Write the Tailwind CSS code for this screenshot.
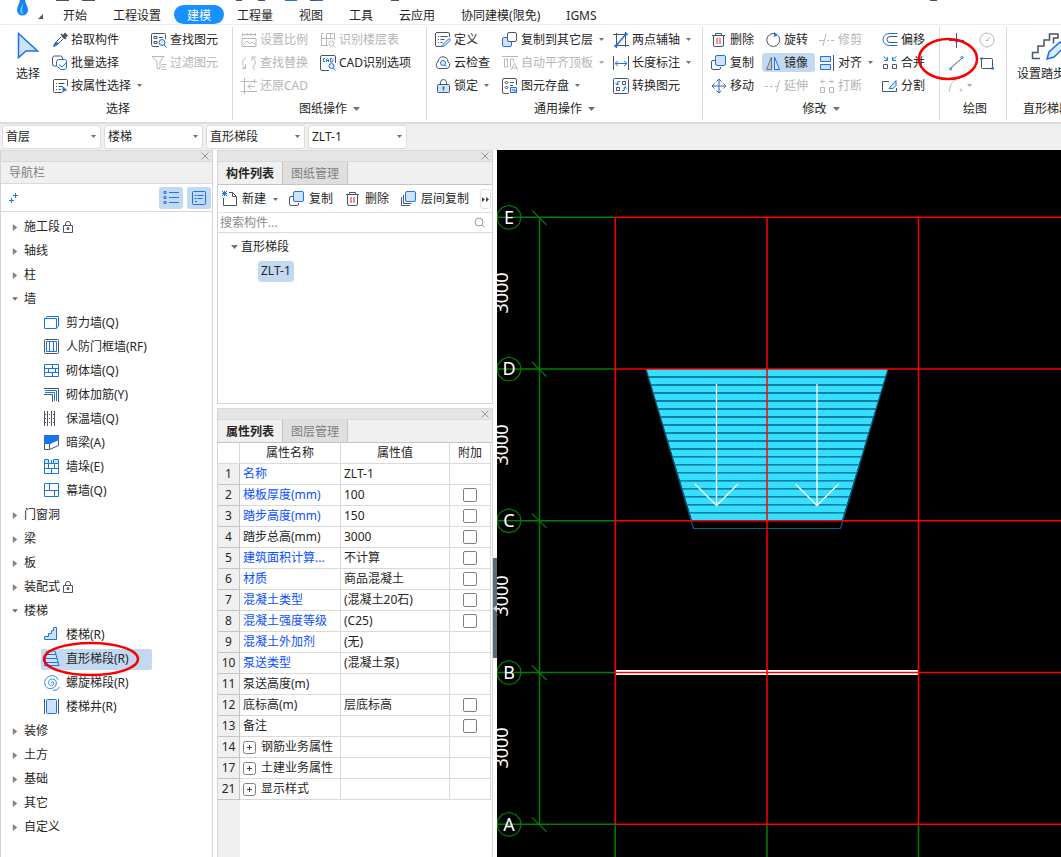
<!DOCTYPE html>
<html lang="zh-CN">
<head>
    <meta charset="UTF-8">
    <meta name="viewport" content="width=device-width, initial-scale=1.0">
    <title>建模</title>
    <script src="https://cdn.jsdelivr.net/npm/@tailwindcss/browser@4"></script>
</head>
<body class="flex h-screen flex-col overflow-hidden bg-white font-['Noto_Sans','Noto_Sans_CJK_SC',sans-serif] text-xs leading-4 text-[#262626]">

    <!-- Icon set -->
    <svg class="hidden">
        <symbol id="caret" viewBox="0 0 7 4"><path d="M0 0h7L3.500 4z" fill="#707070"/></symbol>
        <symbol id="close" viewBox="0 0 8 8"><path d="M.5 .5l7 7M7.500 .5l-7 7" stroke="#999" fill="none"/></symbol>
        <symbol id="picker" viewBox="0 0 16 16"><path d="M9 2l5 5M10.500 4.500l2.500-3 2 2-3 2.500z" stroke="#4a5468" stroke-width="1.500" fill="#4a5468"/><path d="M9 5l-6 6-1 3 3-1 6-6" fill="none" stroke="#4a5468"/><path d="M5 10l-3 2-1 3 2-.5 4-3.500z" fill="#1a73e8"/></symbol>
        <symbol id="batch" viewBox="0 0 16 16"><path d="M4 11H2.500a2 2 0 0 1-2-2V3a2 2 0 0 1 2-2h6a2 2 0 0 1 2 2v1" fill="none" stroke="#4a5468"/><path d="M7 4.500h5.500a2 2 0 0 1 2 2V12a2 2 0 0 1-2 2.500H9L4.500 11V7A2.500 2.500 0 0 1 7 4.500z" fill="#fff" stroke="#1a73e8"/><path d="M7 9.500l3 2.500 4-4" stroke="#1a73e8" fill="none"/></symbol>
        <symbol id="byprop" viewBox="0 0 16 16"><path d="M10 14.500H2.500a1 1 0 0 1-1-1v-11a1 1 0 0 1 1-1h12a1 1 0 0 1 1 1V8M4 5.500h1M4 8.500h1M4 11.500h1M6.500 5.500h6M6.500 8.500h4M6.500 11.500h2" fill="none" stroke="#4a5468"/><path d="M10.500 8l5 4.500-2.500.3-2.500 2z" fill="#1a73e8"/></symbol>
        <symbol id="find" viewBox="0 0 16 16"><path d="M8 14.500H2.500a2 2 0 0 1-2-2v-10a1 1 0 0 1 1-1h12a1 1 0 0 1 1 1V7" fill="none" stroke="#4a5468"/><path d="M3 4.500h3v2H3zM3 9.500h3v2H3zM8 5.500h4" fill="none" stroke="#4a5468"/><circle cx="11" cy="10.500" r="3" fill="#dbeafe" stroke="#1a73e8"/><path d="M13 13l2.500 2.500" stroke="#1a73e8"/></symbol>
        <symbol id="filter" viewBox="0 0 16 16"><path d="M1 1.500h12L9 7v6.500H6V7L1 1.500M10.500 9.500h5M10.500 12h4M10.500 14.500h5" fill="none" stroke="#b8b8b8"/></symbol>
        <symbol id="scale" viewBox="0 0 16 16"><path d="M1.500 1v3M14.500 1v3M2 2.500h12M6 1v3M10 1v3M1 6.500h14v8H1zM2 13l4-4 3 3 2-2 4 3" fill="none" stroke="#b8b8b8"/></symbol>
        <symbol id="replace" viewBox="0 0 16 16"><path d="M5 2.500C1 4.500.5 10 4 13M4.500 9.500V13.500H1M11 2c4 2 4.500 7 1 10M11 6V2h4M11.500 12l2.500 3" fill="none" stroke="#b8b8b8"/></symbol>
        <symbol id="restore" viewBox="0 0 16 16"><path d="M3.500 0v16M0 3.500h16M13.500 1v4M0 13.500h16M7 8.500h7M10 5.500l-3 3 3 3" fill="none" stroke="#b8b8b8"/></symbol>
        <symbol id="floors" viewBox="0 0 16 16"><path d="M1.500 1v12.500H8M1.500 6.500h12M6.500 1.500h8V8M6.500 1.500v12M10.500 2v5M1 1.500h3" fill="none" stroke="#b8b8b8"/><circle cx="11.500" cy="11.500" r="2.500" fill="none" stroke="#b8b8b8"/><path d="M13.500 13.500l2 2" stroke="#b8b8b8"/></symbol>
        <symbol id="cad" viewBox="0 0 16 16"><path d="M9 15.500H2a1.500 1.500 0 0 1-1.500-1.500V2A1.500 1.500 0 0 1 2 .5h12A1.500 1.500 0 0 1 15.500 2v6" fill="none" stroke="#4a5468"/><path d="M5 3.500H3.500v3H5M6.500 7V4.500l1-1 1 1V7M6.500 5.500h2M10.500 3.500v3.500h1.500l1-1V4.500l-1-1z" fill="none" stroke="#1a73e8"/><circle cx="11.500" cy="11" r="2.500" fill="#dbeafe" stroke="#1a73e8"/><path d="M13.500 13l2 2.500" stroke="#1a73e8"/></symbol>
        <symbol id="define" viewBox="0 0 16 16"><path d="M7 14.500H2a1.500 1.500 0 0 1-1.500-1.500V2A1.500 1.500 0 0 1 2 .5h11A1.500 1.500 0 0 1 14.500 2v3M3 4.500h1M3 7.500h1M3 10.500h1M5.500 4.500h7M5.500 7.500h4M5.500 10.500h2" fill="none" stroke="#4a5468"/><path d="M14 6.500l1.500 1.500-6 6-2 .5.5-2z" fill="#dbeafe" stroke="#1a73e8"/></symbol>
        <symbol id="cloud" viewBox="0 0 16 16"><path d="M4 13.500a3.500 3.500 0 0 1-1-6.500C3 0 13 0 13 7a3.500 3.500 0 0 1-1 6.500z" fill="none" stroke="#4a5468"/><circle cx="8" cy="8" r="2.500" fill="#dbeafe" stroke="#1a73e8"/><path d="M10 10l1.500 1.500" stroke="#1a73e8"/></symbol>
        <symbol id="lock" viewBox="0 0 16 16"><path d="M5.500 6V4.500a3 3 0 0 1 6 0V6" fill="none" stroke="#4a5468"/><rect x="2.500" y="6.500" width="12" height="8" rx="1" fill="#cfe2fb" stroke="#4a5468"/><path d="M8.500 8.500v4M7.500 9.500h2" stroke="#1a73e8" stroke-width="1.500"/></symbol>
        <symbol id="copyto" viewBox="0 0 16 16"><rect x=".5" y="5.500" width="9" height="9" rx="1.500" fill="#cfe2fb" stroke="#1a73e8"/><rect x="5.500" y=".5" width="9" height="9" rx="1.500" fill="#fff" stroke="#4a5468"/></symbol>
        <symbol id="aligntop" viewBox="0 0 16 16"><path d="M0 1.500h16M2.500 4h3v8h-3zM8.500 12V4h3v3M9 15l3.500-7L15.500 15M10 13h5" fill="none" stroke="#b8b8b8"/></symbol>
        <symbol id="store" viewBox="0 0 16 16"><path d="M7 15.500H2A1.500 1.500 0 0 1 .5 14V2A1.500 1.500 0 0 1 2 .5h11A1.500 1.500 0 0 1 14.500 2v5M8 4.500h4M8 7.500h3" fill="none" stroke="#4a5468"/><ellipse cx="4.500" cy="4.500" rx="1.500" ry="1" fill="none" stroke="#4a5468"/><ellipse cx="4.500" cy="9.500" rx="1.500" ry="1" fill="none" stroke="#4a5468"/><path d="M8.500 9.500h6v5h-6zM10 12h3v2.500" fill="#dbeafe" stroke="#1a73e8"/></symbol>
        <symbol id="axis" viewBox="0 0 16 16"><path d="M3.500 1v15M12.500 0v15M0 2.500h15M1 13.500h15" stroke="#4a5468" fill="none"/><path d="M3 14L13 2" stroke="#1a73e8" stroke-width="1.500"/><circle cx="3" cy="14" r="1.500" fill="#1a73e8"/><circle cx="13" cy="2" r="1.500" fill="#1a73e8"/></symbol>
        <symbol id="length" viewBox="0 0 16 16"><path d="M.5 1v14M15.500 1v14" stroke="#4a5468"/><path d="M2 8.500h12M5 6l-3 2.500L5 11M11 6l3 2.500L11 11" stroke="#1a73e8" fill="none"/></symbol>
        <symbol id="convert" viewBox="0 0 16 16"><rect x=".5" y=".5" width="15" height="15" rx="1" fill="none" stroke="#4a5468"/><path d="M9.500 3.500h3v3h-3zM3.500 9.500h3v3h-3z" fill="none" stroke="#4a5468"/><path d="M7 3.500H5L4 6.500M2.500 5l1.500 2L6 5.500M9 12.500h2l1-3M10.500 10.500l1.500-2 1.500 2" stroke="#1a73e8" fill="none"/></symbol>
        <symbol id="trash" viewBox="0 0 16 16"><path d="M1 3.500h13M4.500 3V1.500h6V3M2.500 4v9A1.500 1.500 0 0 0 4 14.500h7a1.500 1.500 0 0 0 1.500-1.500V4" fill="none" stroke="#4a5468"/><path d="M6 6v6M9 6v6" stroke="#e02020"/></symbol>
        <symbol id="copy" viewBox="0 0 16 16"><path d="M4 5.500H2A1.500 1.500 0 0 0 .5 7v6A1.500 1.500 0 0 0 2 14.500h6A1.500 1.500 0 0 0 9.500 13v-1" fill="none" stroke="#4a5468"/><rect x="4.500" y=".5" width="10" height="10" rx="1.500" fill="#cfe2fb" stroke="#1a73e8"/></symbol>
        <symbol id="move" viewBox="0 0 16 16"><path d="M8 2v4M8 10v4M2 8h4M10 8h4" stroke="#4a5468"/><path d="M5.500 3.500L8 1l2.500 2.500M5.500 12.500L8 15l2.500-2.500M3.500 5.500L1 8l2.500 2.500M12.500 5.500L15 8l-2.500 2.500M6 8h4M8 6v4" fill="none" stroke="#1a73e8"/></symbol>
        <symbol id="rotate" viewBox="0 0 16 16"><path d="M9 1.500a6.500 6.500 0 1 0 4 2" fill="none" stroke="#4a5468"/><path d="M9 0l4 3-4 2z" fill="#1a73e8"/></symbol>
        <symbol id="mirror" viewBox="0 0 16 16"><path d="M6.500 2v12.500h-5z" fill="#c4c9d4" stroke="#6b7280"/><path d="M9.500 2v12.500h5z" fill="#dbeafe" stroke="#1a73e8"/></symbol>
        <symbol id="extend" viewBox="0 0 16 16"><path d="M0 8.500h3M5 8.500h3M10 8.500h2M14.500 2l-3 12" fill="none" stroke="#b8b8b8"/></symbol>
        <symbol id="trim" viewBox="0 0 16 16"><path d="M0 8.500h5M7 2L4 14M8 8.500h2M12 8.500h3" fill="none" stroke="#b8b8b8"/></symbol>
        <symbol id="align" viewBox="0 0 16 16"><path d="M1.500 1.500h10v5h-10zM1.500 9.500h10v5h-10z" fill="#cfe2fb" stroke="#1a73e8"/><path d="M14.500 0v16" stroke="#4a5468"/></symbol>
        <symbol id="break" viewBox="0 0 16 16"><path d="M1.500 9.500h4v5h-4zM10.500 9.500h4v5h-4zM2 3.500h4M4 1.500l-2 2 2 2M10 3.500h4M12 1.500l2 2-2 2" fill="none" stroke="#b8b8b8"/></symbol>
        <symbol id="offset" viewBox="0 0 16 16"><path d="M15.500 1.500H7a6 6 0 0 0 0 12h8.500" fill="none" stroke="#1a73e8"/><path d="M15.500 4.500H8a3 3 0 0 0 0 6h7.500" fill="none" stroke="#4a5468"/></symbol>
        <symbol id="merge" viewBox="0 0 16 16"><path d="M1.500 9.500h4v4h-4zM10.500 9.500h4v4h-4z" fill="none" stroke="#4a5468"/><path d="M1.500 1.500l3.500 3M5.500 2v3.500H2M14.500 1.500l-3.500 3M10.500 2v3.500H14" fill="none" stroke="#1a73e8"/></symbol>
        <symbol id="split" viewBox="0 0 16 16"><path d="M7 3.500H.5v10h14V10" fill="none" stroke="#4a5468"/><path d="M14 2.500v5l-3 3H7z" fill="#dbeafe" stroke="#1a73e8"/></symbol>
        <symbol id="point" viewBox="0 0 16 16"><path d="M8.500 1v15M1 8.500h15" stroke="#4a5468"/><circle cx="8.500" cy="8.500" r="2" fill="#1a73e8"/></symbol>
        <symbol id="circle" viewBox="0 0 16 16"><circle cx="8" cy="8" r="7" fill="none" stroke="#b8b8b8"/><path d="M8 8l3-3M6.500 8.500h3" stroke="#b8b8b8"/></symbol>
        <symbol id="line" viewBox="0 0 16 16"><path d="M3 13L14 3" stroke="#4a5468"/><circle cx="2.500" cy="14" r="1" fill="#fff" stroke="#1a73e8"/><circle cx="14" cy="2.500" r="1" fill="#fff" stroke="#1a73e8"/></symbol>
        <symbol id="rect" viewBox="0 0 16 16"><rect x="2.500" y="3.500" width="11" height="10" rx="1" fill="none" stroke="#4a5468"/><path d="M1 3.500h3M12 13.500h3" stroke="#1a73e8" stroke-width="2"/></symbol>
        <symbol id="arc" viewBox="0 0 16 16"><path d="M1.500 13.500C2 7 4 3 8 2" fill="none" stroke="#b8b8b8"/><circle cx="13" cy="12" r="1" fill="none" stroke="#b8b8b8"/></symbol>
        <symbol id="nav-lock" viewBox="0 0 10 12"><path d="M2.500 4V3a2.500 2.500 0 0 1 5 0v1M.5 4.500h9v7h-9zM5 7v2" fill="none" stroke="#4a5468"/><circle cx="5" cy="7.500" r="1" fill="none" stroke="#4a5468"/></symbol>
        <symbol id="right" viewBox="0 0 5 8"><path d="M0 0l5 4-5 4z" fill="#808080"/></symbol>
        <symbol id="plusbox" viewBox="0 0 13 13"><rect x=".5" y=".5" width="12" height="12" rx="2" fill="#fff" stroke="#808080"/><path d="M4 6.500h5M6.500 4v5" stroke="#444"/></symbol>
    </svg>

    <!-- Menu tabs -->
    <header class="relative flex h-[25px] shrink-0 items-end border-b border-[#ececec] pl-[50px]">
        <svg class="absolute left-0 top-0 h-6 w-full" aria-hidden="true">
            <path d="M20 0h5c0 3 3 6 3 10a5.500 5.500 0 0 1-11 0c0-4 3-7 3-10z" fill="#1583f2"/>
            <path d="M23 3c-1 3-3 5-3 8 0 2 2 3 4 3-3-2-1-8-1-11z" fill="#5cc3ff"/>
            <path d="M43 14v5h-5z" fill="#555"/>
            <path d="M56 .5h13M82 .5h13M236 .5h6M258 .5h7M310 .5h10M391 .5h8M930 .5h7" stroke="#4a5468"/>
            <path d="M285 .5h12M317 .5h6" stroke="#1a73e8"/>
        </svg>
        <nav class="relative flex h-[19px] [&>button]:h-[19px] [&>button]:px-[13px] [&>button]:pt-[2px] [&>button]:whitespace-nowrap">
            <button>开始</button>
            <button>工程设置</button>
            <button class="rounded-full bg-[#1890ff] text-white">建模</button>
            <button>工程量</button>
            <button>视图</button>
            <button>工具</button>
            <button>云应用</button>
            <button>协同建模(限免)</button>
            <button>IGMS</button>
        </nav>
    </header>

    <!-- Ribbon -->
    <div class="flex h-[99px] shrink-0 overflow-hidden border-b-2 border-[#dcdcdc] py-[2px] whitespace-nowrap [&_button]:flex [&_button]:h-[23px] [&_button]:items-center [&_button]:gap-[3px] [&_button:disabled]:text-[#b5b5b5] [&_section]:flex [&_section]:shrink-0 [&_section]:flex-col [&_section]:border-r [&_section]:border-[#d9d9d9] [&_section]:pt-px [&_svg]:shrink-0">
        <section class="w-[233px]">
            <div class="flex">
                <div class="ml-4 flex w-9 flex-col gap-[2px] pt-1">
                    <svg class="h-7 w-6" viewBox="0 0 24 28"><path d="M2.500 1.500v24L10 19h11.500z" fill="#cfe2fb" stroke="#1a73e8" stroke-width="1.500"/></svg>
                    <button>选择</button>
                </div>
                <div class="w-[99px]">
                    <button><svg class="size-4"><use href="#picker"/></svg>拾取构件</button>
                    <button><svg class="size-4"><use href="#batch"/></svg>批量选择</button>
                    <button><svg class="size-4"><use href="#byprop"/></svg>按属性选择<svg class="ml-[3px] h-[3px] w-[5px]"><use href="#caret"/></svg></button>
                </div>
                <div>
                    <button><svg class="size-4"><use href="#find"/></svg>查找图元</button>
                    <button disabled><svg class="size-4"><use href="#filter"/></svg>过滤图元</button>
                </div>
            </div>
            <div class="flex h-7 items-center justify-center pl-1">选择</div>
        </section>

        <section class="w-[194px]">
            <div class="flex pl-2">
                <div class="w-[79px]">
                    <button disabled><svg class="size-4"><use href="#scale"/></svg>设置比例</button>
                    <button disabled><svg class="size-4"><use href="#replace"/></svg>查找替换</button>
                    <button disabled><svg class="size-4"><use href="#restore"/></svg>还原CAD</button>
                </div>
                <div>
                    <button disabled><svg class="size-4"><use href="#floors"/></svg>识别楼层表</button>
                    <button><svg class="size-4"><use href="#cad"/></svg>CAD识别选项</button>
                </div>
            </div>
            <div class="flex h-[26px] items-center justify-center gap-[6px]">图纸操作<svg class="h-1 w-[7px]"><use href="#caret"/></svg></div>
        </section>

        <section class="w-[276px]">
            <div class="flex pl-2">
                <div class="w-[67px]">
                    <button><svg class="size-4"><use href="#define"/></svg>定义</button>
                    <button><svg class="size-4"><use href="#cloud"/></svg>云检查</button>
                    <button><svg class="size-4"><use href="#lock"/></svg>锁定<svg class="ml-[3px] h-[3px] w-[5px]"><use href="#caret"/></svg></button>
                </div>
                <div class="w-[111px]">
                    <button><svg class="size-4"><use href="#copyto"/></svg>复制到其它层<svg class="ml-[3px] h-[3px] w-[5px]"><use href="#caret"/></svg></button>
                    <button disabled><svg class="size-4"><use href="#aligntop"/></svg>自动平齐顶板<svg class="ml-[3px] h-[3px] w-[5px] opacity-60"><use href="#caret"/></svg></button>
                    <button><svg class="size-4"><use href="#store"/></svg>图元存盘<svg class="ml-[3px] h-[3px] w-[5px]"><use href="#caret"/></svg></button>
                </div>
                <div>
                    <button><svg class="size-4"><use href="#axis"/></svg>两点辅轴<svg class="ml-[3px] h-[3px] w-[5px]"><use href="#caret"/></svg></button>
                    <button><svg class="size-4"><use href="#length"/></svg>长度标注<svg class="ml-[3px] h-[3px] w-[5px]"><use href="#caret"/></svg></button>
                    <button><svg class="size-4"><use href="#convert"/></svg>转换图元</button>
                </div>
            </div>
            <div class="flex h-[26px] items-center justify-center gap-[6px]">通用操作<svg class="h-1 w-[7px]"><use href="#caret"/></svg></div>
        </section>

        <section class="w-[237px]">
            <div class="flex pl-2">
                <div class="w-[51px]">
                    <button><svg class="size-4"><use href="#trash"/></svg>删除</button>
                    <button><svg class="size-4"><use href="#copy"/></svg>复制</button>
                    <button><svg class="size-4"><use href="#move"/></svg>移动</button>
                </div>
                <div class="w-[57px] [&>button]:px-[3px]">
                    <button><svg class="size-4"><use href="#rotate"/></svg>旋转</button>
                    <div class="flex h-[23px] items-center"><button class="!h-[19px] rounded-[3px] bg-[#c2d9f1] pr-[7px] pl-[3px]"><svg class="size-4"><use href="#mirror"/></svg>镜像</button></div>
                    <button disabled><svg class="size-4"><use href="#extend"/></svg>延伸</button>
                </div>
                <div class="w-[63px]">
                    <button disabled><svg class="size-4"><use href="#trim"/></svg>修剪</button>
                    <button><svg class="size-4"><use href="#align"/></svg>对齐<svg class="ml-[3px] h-[3px] w-[5px]"><use href="#caret"/></svg></button>
                    <button disabled><svg class="size-4"><use href="#break"/></svg>打断</button>
                </div>
                <div>
                    <button><svg class="size-4"><use href="#offset"/></svg>偏移</button>
                    <button><svg class="size-4"><use href="#merge"/></svg>合并</button>
                    <button><svg class="size-4"><use href="#split"/></svg>分割</button>
                </div>
            </div>
            <div class="flex h-[26px] items-center justify-center gap-[6px]">修改<svg class="h-1 w-[7px]"><use href="#caret"/></svg></div>
        </section>

        <section class="relative w-[67px]">
            <div class="flex pl-2">
                <div class="w-[31px]">
                    <button aria-label="点"><svg class="size-4"><use href="#point"/></svg></button>
                    <button aria-label="直线"><svg class="size-4"><use href="#line"/></svg></button>
                    <button disabled aria-label="弧"><svg class="size-4"><use href="#arc"/></svg><svg class="h-[3px] w-[5px] opacity-60"><use href="#caret"/></svg></button>
                </div>
                <div>
                    <button disabled aria-label="圆"><svg class="size-4"><use href="#circle"/></svg></button>
                    <button aria-label="矩形"><svg class="size-4"><use href="#rect"/></svg></button>
                </div>
            </div>
            <div class="flex h-7 items-center justify-center pl-1">绘图</div>
            <svg class="absolute -left-[23px] top-[10px] h-[44px] w-[62px]"><ellipse cx="31" cy="22" rx="29" ry="20" fill="none" stroke="#fa0000" stroke-width="2.500"/></svg>
        </section>

        <section class="w-[80px] items-center border-r-0!">
            <div class="flex h-[69px] shrink-0 flex-col items-center gap-[2px] pt-1">
                <svg class="ml-1 h-7 w-9" viewBox="0 0 36 28"><path d="M9 26.500H1.500v-6H7V14h6V8h5.500V2H27v4h-4.500v5.500" fill="none" stroke="#4a5468" stroke-width="1.500"/><path d="M29 10l5 4.500L23 25l-7 2 2-7z" fill="#dbeafe" stroke="#1a73e8" stroke-width="1.500"/></svg>
                <button>设置踏步边</button>
            </div>
            <div class="flex h-7 items-center">直形梯段</div>
        </section>
    </div>

    <!-- Context selectors -->
    <div class="flex h-[26px] shrink-0 gap-[3px] bg-[#f0f0f0] px-[2px] py-px [&_label]:relative [&_select]:h-6 [&_select]:w-[99px] [&_select]:appearance-none [&_select]:rounded-[3px] [&_select]:border [&_select]:border-[#dcdcdc] [&_select]:bg-white [&_select]:pl-[3px] [&_svg]:pointer-events-none [&_svg]:absolute [&_svg]:right-[5px] [&_svg]:top-[10px] [&_svg]:h-[3px] [&_svg]:w-[5px]">
        <label><select aria-label="楼层"><option>首层</option></select><svg><use href="#caret"/></svg></label>
        <label><select aria-label="构件类别"><option>楼梯</option></select><svg><use href="#caret"/></svg></label>
        <label><select aria-label="构件类型"><option>直形梯段</option></select><svg><use href="#caret"/></svg></label>
        <label><select aria-label="构件"><option>ZLT-1</option></select><svg><use href="#caret"/></svg></label>
    </div>

    <main class="flex min-h-0 grow">
        <!-- Navigation -->
        <aside class="flex w-[213px] shrink-0 flex-col border-x border-[#d4d4d4]">
            <div class="flex h-3 items-center justify-end border-y border-[#d9d9d9] bg-[#e6e6e6] pr-[3px]"><button aria-label="关闭"><svg class="size-2"><use href="#close"/></svg></button></div>
            <h2 class="flex h-[22px] items-center border-b border-[#d9d9d9] bg-[#f0f0f0] pl-2 text-[#808080]">导航栏</h2>
            <div class="flex h-7 items-center gap-1 border-b border-[#d9d9d9] pr-px pl-2">
                <button class="mr-auto" aria-label="展开"><svg class="size-[10px]" viewBox="0 0 10 10"><path d="M0 7.500h5M2.500 5v5M4 2.500h5M6.500 0v5" stroke="#1a73e8"/></svg></button>
                <button class="flex h-[22px] w-6 items-center justify-center rounded-[3px] bg-[#c2d9f1]" aria-label="列表"><svg class="size-4" viewBox="0 0 16 16"><path d="M6 2.500h10M6 7.500h10M6 12.500h10M1 1.500h2v2H1zM1 6.500h2v2H1zM1 11.500h2v2H1z" fill="none" stroke="#1a73e8"/></svg></button>
                <button class="flex h-[22px] w-6 items-center justify-center rounded-[3px] bg-[#c2d9f1]" aria-label="详情"><svg class="size-4" viewBox="0 0 16 16"><rect x="1.500" y="1.500" width="13" height="13" rx="1" fill="none" stroke="#1a73e8"/><path d="M3.500 5.500h2M6.500 5.500h6M3.500 8.500h2M6.500 8.500h5M4 11.500h2" stroke="#1a73e8"/></svg></button>
            </div>
            <ul class="overflow-hidden pt-[3px] [&_button]:flex [&_button]:h-6 [&_button]:items-center [&>li>button]:gap-1 [&>li>button]:pl-[11px] [&>li>button>svg:first-child]:mr-[2px] [&_ul_button]:gap-[6px] [&_ul_button]:pl-[43px] [&_ul_svg]:size-4">
                <li><button><svg class="h-[7px] w-[6px]"><use href="#right"/></svg>施工段<svg class="-ml-px h-3 w-[10px]"><use href="#nav-lock"/></svg></button></li>
                <li><button><svg class="h-[7px] w-[6px]"><use href="#right"/></svg>轴线</button></li>
                <li><button><svg class="h-[7px] w-[6px]"><use href="#right"/></svg>柱</button></li>
                <li>
                    <button><svg class="h-1 w-[6px]"><use href="#caret"/></svg>墙</button>
                    <ul>
                        <li><button><svg viewBox="0 0 16 16"><path d="M.5 3.500h12v10H.5zM1.500 3.500L3 1.500h11.500v9.500L12.500 13" fill="none" stroke="#1a73e8"/></svg>剪力墙(Q)</button></li>
                        <li><button><svg viewBox="0 0 16 16"><rect x=".5" y=".5" width="14" height="14" rx="1" fill="none" stroke="#4a5468"/><path d="M2.500 2.500h10v10h-10zM5.500 3v9M9.500 3v9" fill="none" stroke="#1a73e8"/></svg>人防门框墙(RF)</button></li>
                        <li><button><svg viewBox="0 0 16 16"><path d="M.5 1.500h14v12H.5zM.5 5.500h14M.5 9.500h14M8.500 2v3.500M4.500 6v3M11.500 6v3M8.500 10v3" fill="none" stroke="#1a73e8"/></svg>砌体墙(Q)</button></li>
                        <li><button><svg viewBox="0 0 16 16"><path d="M0 1.500h14.500V15M0 7.500h8.500V15" fill="none" stroke="#4a5468"/><path d="M1 3.500h11.500V14M1 5.500h9.500V14" fill="none" stroke="#1a73e8"/></svg>砌体加筋(Y)</button></li>
                        <li><button><svg viewBox="0 0 16 16"><path d="M.5 0v15M3.500 0v15M7.500 0v15M10.500 0v15" stroke="#4a5468"/><path d="M1 3.500h10M1 7.500h10M1 11.500h10" stroke="#4a5468" stroke-dasharray="1 1"/></svg>保温墙(Q)</button></li>
                        <li><button><svg viewBox="0 0 16 16"><path d="M0 0h15v5L6 9H0z" fill="#1a73e8"/><path d="M.5 9v5.500h5l9-4V5M5.500 9v5" fill="none" stroke="#4a5468"/></svg>暗梁(A)</button></li>
                        <li><button><svg viewBox="0 0 16 16"><path d="M1 1h4v4H1zM10 1h4v4h-4z" fill="#cfe2fb"/><path d="M.5 .5h4v4h5v-4h5v14H.5zM4.500 4.500H0M9.500 4.500H15M7.500 1v4M.5 9.500h14M4.500 5v4M10.500 5v4M7.500 10v4" fill="none" stroke="#1a73e8"/></svg>墙垛(E)</button></li>
                        <li><button><svg viewBox="0 0 16 16"><path d="M.5 .5h14v13H.5zM.5 7.500h14M5.500 1v6.500M10.500 8v5" fill="none" stroke="#1a73e8"/></svg>幕墙(Q)</button></li>
                    </ul>
                </li>
                <li><button><svg class="h-[7px] w-[6px]"><use href="#right"/></svg>门窗洞</button></li>
                <li><button><svg class="h-[7px] w-[6px]"><use href="#right"/></svg>梁</button></li>
                <li><button><svg class="h-[7px] w-[6px]"><use href="#right"/></svg>板</button></li>
                <li><button><svg class="h-[7px] w-[6px]"><use href="#right"/></svg>装配式<svg class="-ml-px h-3 w-[10px]"><use href="#nav-lock"/></svg></button></li>
                <li>
                    <button><svg class="h-1 w-[6px]"><use href="#caret"/></svg>楼梯</button>
                    <ul>
                        <li><button><svg viewBox="0 0 16 16"><path d="M.5 12.500v-3h4v-3h3v-3h2v-3h3v12z" fill="#cfe2fb" stroke="#1a73e8"/></svg>楼梯(R)</button></li>
                        <li class="relative flex h-6 items-center pl-10">
                            <button class="!h-[21px] w-[111px] rounded-[2px] bg-[#c2d9f1] !pl-[3px]"><svg viewBox="0 0 16 16"><path d="M3 0h8l4 14.500H0zM3 3.500h9M2 7.500h11M1 11.500h13" fill="#cfe2fb" stroke="#1a73e8"/></svg>直形梯段(R)</button>
                            <svg class="absolute top-[-6px] left-10 !h-9 !w-[100px]"><ellipse cx="50" cy="18" rx="47" ry="16" fill="none" stroke="#fa0000" stroke-width="2.500"/></svg>
                        </li>
                        <li><button><svg viewBox="0 0 16 16"><path d="M8 8.500C6.500 8 7.500 6 9 7c2 1.500 0 4.500-2.500 3.500C3 9 4.500 4 8.500 4c5 0 5 7.500.5 9C4 15 .5 11.500.7 7.500 1 3 4.500.7 8 .7c3 0 5 1.500 6 4M15.500 12c-1.500 2.500-4 3.500-6.500 3.300" fill="none" stroke="#2f86ee"/></svg>螺旋梯段(R)</button></li>
                        <li><button><svg viewBox="0 0 16 16"><rect x="2.500" y=".5" width="10" height="14" rx="1" fill="#cfe2fb" stroke="#1a73e8"/><path d="M.5 0v15M14.500 0v15" stroke="#4a5468"/></svg>楼梯井(R)</button></li>
                    </ul>
                </li>
                <li><button><svg class="h-[7px] w-[6px]"><use href="#right"/></svg>装修</button></li>
                <li><button><svg class="h-[7px] w-[6px]"><use href="#right"/></svg>土方</button></li>
                <li><button><svg class="h-[7px] w-[6px]"><use href="#right"/></svg>基础</button></li>
                <li><button><svg class="h-[7px] w-[6px]"><use href="#right"/></svg>其它</button></li>
                <li><button><svg class="h-[7px] w-[6px]"><use href="#right"/></svg>自定义</button></li>
            </ul>
        </aside>

        <div class="ml-1 flex w-[276px] shrink-0 flex-col">
            <!-- Component list -->
            <section class="flex h-[254px] shrink-0 flex-col border border-t-0 border-[#d4d4d4]">
                <div class="flex h-3 items-center justify-end border-y border-[#d9d9d9] bg-[#e6e6e6] pr-[3px]"><button aria-label="关闭"><svg class="size-2"><use href="#close"/></svg></button></div>
                <div class="flex h-[23px] border-b border-[#c4c4c4] bg-[#f0f0f0] [&>button]:border-r [&>button]:border-[#c4c4c4] [&>button]:pt-[2px]">
                    <button class="w-[65px] font-bold">构件列表</button>
                    <button class="w-[65px] bg-[#dfdfdf] text-[#808080]">图纸管理</button>
                </div>
                <div class="flex h-7 shrink-0 items-center border-b border-[#e2e2e2] pt-px whitespace-nowrap [&>button]:flex [&>button]:items-center [&>button]:gap-1">
                    <button class="ml-1 w-[67px]"><svg class="size-4" viewBox="0 0 16 16"><path d="M1.500 7v7.500h13v-9l-4-4H7M10.500 1.500v4h4" fill="none" stroke="#4a5468"/><path d="M0 0l5 5M5 0L0 5M2.500 0v5M0 2.500h5" stroke="#1a73e8"/></svg>新建<svg class="ml-[3px] h-[3px] w-[5px]"><use href="#caret"/></svg></button>
                    <button class="w-[56px]"><svg class="size-4"><use href="#copy"/></svg>复制</button>
                    <button class="w-[56px]"><svg class="size-4"><use href="#trash"/></svg>删除</button>
                    <button class="grow"><svg class="size-4" viewBox="0 0 16 16"><path d="M.5 6v8.500H9M2.500 4v8.500h8" fill="none" stroke="#4a5468"/><rect x="4.500" y=".5" width="10" height="10" rx="1.500" fill="#cfe2fb" stroke="#1a73e8"/></svg>层间复制</button>
                    <button class="mr-px h-5 w-[11px] justify-center rounded-[3px] border border-[#e2e2e2]" aria-label="更多"><svg class="h-[5px] w-[7px] shrink-0" viewBox="0 0 7 5"><path d="M0 0l3 2.500L0 5zM4 0l3 2.500L4 5z" fill="#444"/></svg></button>
                </div>
                <label class="flex h-5 shrink-0 items-center border-b border-[#d9d9d9] pr-[7px]">
                    <input class="h-4 min-w-0 grow pl-[2px] outline-none placeholder:text-[#8c8c8c]" placeholder="搜索构件..." aria-label="搜索构件">
                    <svg class="size-[11px]" viewBox="0 0 11 11"><circle cx="5" cy="5" r="4" fill="none" stroke="#999"/><path d="M8 8l2.500 2.500" stroke="#999"/></svg>
                </label>
                <ul class="pt-[2px]">
                    <li>
                        <button class="flex h-6 items-center gap-[3px] pl-[13px]"><svg class="h-1 w-[7px]"><use href="#caret"/></svg>直形梯段</button>
                        <ul><li class="flex h-6 items-center pl-10"><button class="h-[21px] rounded-[3px] bg-[#c2d9f1] px-[3px]">ZLT-1</button></li></ul>
                    </li>
                </ul>
            </section>

            <!-- Properties -->
            <section class="mt-1 flex min-h-0 grow flex-col border border-y-0 border-[#d4d4d4]">
                <div class="flex h-3 shrink-0 items-center justify-end border-y border-[#d9d9d9] bg-[#e6e6e6] pr-[3px]"><button aria-label="关闭"><svg class="size-2"><use href="#close"/></svg></button></div>
                <div class="flex h-[23px] shrink-0 border-b border-[#c4c4c4] bg-[#f0f0f0] [&>button]:border-r [&>button]:border-[#c4c4c4] [&>button]:pt-[2px]">
                    <button class="w-[65px] font-bold">属性列表</button>
                    <button class="w-[65px] bg-[#dfdfdf] text-[#808080]">图层管理</button>
                </div>
                <table class="mr-px table-fixed border-separate border-spacing-0 whitespace-nowrap [&_input]:mx-auto [&_input]:block [&_input]:size-[14px] [&_input]:appearance-none [&_input]:rounded-[2px] [&_input]:border [&_input]:border-[#808080] [&_td]:h-[21px] [&_td]:border-r [&_td]:border-b [&_td]:border-[#d9d9d9] [&_td]:px-[3px] [&_th]:h-[21px] [&_th]:border-r [&_th]:border-b [&_th]:border-[#d9d9d9] [&_th]:font-normal [&_tbody_th]:border-[#c4c4c4] [&_tbody_th]:bg-[#f0f0f0]">
                    <colgroup><col class="w-[22px]"><col class="w-[101px]"><col class="w-[109px]"><col class="w-[41px]"></colgroup>
                    <thead><tr><th></th><th>属性名称</th><th>属性值</th><th>附加</th></tr></thead>
                    <tbody>
                        <tr><th>1</th><td class="text-[#0a50ff]">名称</td><td>ZLT-1</td><td></td></tr>
                        <tr><th>2</th><td class="text-[#0a50ff]">梯板厚度(mm)</td><td>100</td><td><input type="checkbox" aria-label="梯板厚度"></td></tr>
                        <tr><th>3</th><td class="text-[#0a50ff]">踏步高度(mm)</td><td>150</td><td><input type="checkbox" aria-label="踏步高度"></td></tr>
                        <tr><th>4</th><td>踏步总高(mm)</td><td>3000</td><td><input type="checkbox" aria-label="踏步总高"></td></tr>
                        <tr><th>5</th><td class="text-[#0a50ff]">建筑面积计算...</td><td>不计算</td><td><input type="checkbox" aria-label="建筑面积计算"></td></tr>
                        <tr><th>6</th><td class="text-[#0a50ff]">材质</td><td>商品混凝土</td><td><input type="checkbox" aria-label="材质"></td></tr>
                        <tr><th>7</th><td class="text-[#0a50ff]">混凝土类型</td><td>(混凝土20石)</td><td><input type="checkbox" aria-label="混凝土类型"></td></tr>
                        <tr><th>8</th><td class="text-[#0a50ff]">混凝土强度等级</td><td>(C25)</td><td><input type="checkbox" aria-label="混凝土强度等级"></td></tr>
                        <tr><th>9</th><td class="text-[#0a50ff]">混凝土外加剂</td><td>(无)</td><td></td></tr>
                        <tr><th>10</th><td class="text-[#0a50ff]">泵送类型</td><td>(混凝土泵)</td><td></td></tr>
                        <tr><th>11</th><td>泵送高度(m)</td><td></td><td></td></tr>
                        <tr><th>12</th><td>底标高(m)</td><td>层底标高</td><td><input type="checkbox" aria-label="底标高"></td></tr>
                        <tr><th>13</th><td>备注</td><td></td><td><input type="checkbox" aria-label="备注"></td></tr>
                        <tr><th>14</th><td><button class="flex items-center gap-[5px]"><svg class="size-[13px]"><use href="#plusbox"/></svg>钢筋业务属性</button></td><td></td><td></td></tr>
                        <tr><th>17</th><td><button class="flex items-center gap-[5px]"><svg class="size-[13px]"><use href="#plusbox"/></svg>土建业务属性</button></td><td></td><td></td></tr>
                        <tr><th>21</th><td><button class="flex items-center gap-[5px]"><svg class="size-[13px]"><use href="#plusbox"/></svg>显示样式</button></td><td></td><td></td></tr>
                    </tbody>
                </table>
                <div class="w-[22px] grow bg-[#f0f0f0]"></div>
            </section>
        </div>

        <!-- Panel collapse handle -->
        <div class="flex w-1 shrink-0 flex-col pt-[408px]">
            <button class="flex h-[100px] items-center bg-[#5b6b78]" aria-label="收起"><svg class="h-[7px] w-1" viewBox="0 0 4 7"><path d="M4 0v7L0 3.500z" fill="#d4d4d4"/></svg></button>
        </div>

        <!-- Drawing area -->
        <div class="min-w-0 grow overflow-hidden bg-black">
            <svg class="size-full">
                <defs>
                    <g id="bubble" fill="none" stroke="#008000">
                        <path d="M12-12l7 2.500L23 -5 24 0l-1.500 6-4.500 4.500L12 12l-6-1.500L1.500 6 0 0l1-5L5-9.500zM35-7l14.500 14.500" stroke-width="1.200"/>
                        <path d="M0 0h118" stroke-width="1.500"/>
                    </g>
                </defs>
                <path d="M42.500 67v608M118.200 674v40M270 674v40M421.500 674v40" stroke="#008000" stroke-width="1.500"/>
                <use href="#bubble" y="67.300"/>
                <use href="#bubble" y="219"/>
                <use href="#bubble" y="370.700"/>
                <use href="#bubble" y="522.500"/>
                <use href="#bubble" y="674.300"/>

                <!-- Stair flight -->
                <path d="M149 219h242l-46 151.500H195z" fill="#36dfff"/>
                <path d="M151.400 227h237.100M153.800 235h232.300M156.300 243h227.300M158.700 251h222.500M161.100 259h217.700M163.600 267h212.700M166 275h207.800M168.400 283h203M170.900 291h198.100M173.300 299h193.200M175.700 306.900h188.400M178.200 314.900h183.400M180.600 322.900h178.600M183 330.900h173.700M185.400 338.900h168.900M187.900 346.900H352M190.300 354.900h159.300M192.700 362.900h154.500" stroke="#006383" stroke-width="1.300"/>
                <path d="M149 219l47.500 159.500h147L391 219" fill="none" stroke="#006383" stroke-width="1.200"/>
                <path d="M219.500 234v121.500M198 334l21.500 21.500L241 334M320 234v121.500M298.500 334l21.500 21.500L341.500 334" fill="none" stroke="#fff" stroke-width="1.300"/>
                <path d="M118 522.500h304" stroke="#fff" stroke-width="5"/>

                <!-- Axis grid -->
                <path d="M118 67.300h4000M118 219h4000M118 370.700h4000M118 522.500h4000M118 674.300h4000M118.200 67v607M270 67v607M421.500 67v607" stroke="#ff0000" stroke-width="1.500"/>

                <g fill="#fff" font-size="18" text-anchor="middle">
                    <text x="12" y="74">E</text>
                    <text x="12" y="225">D</text>
                    <text x="12" y="377">C</text>
                    <text x="12" y="529">B</text>
                    <text x="12" y="681">A</text>
                    <text transform="translate(11 143) rotate(-90)">3000</text>
                    <text transform="translate(11 295) rotate(-90)">3000</text>
                    <text transform="translate(11 446) rotate(-90)">3000</text>
                    <text transform="translate(11 598) rotate(-90)">3000</text>
                </g>
            </svg>
        </div>
    </main>
</body>
</html>
